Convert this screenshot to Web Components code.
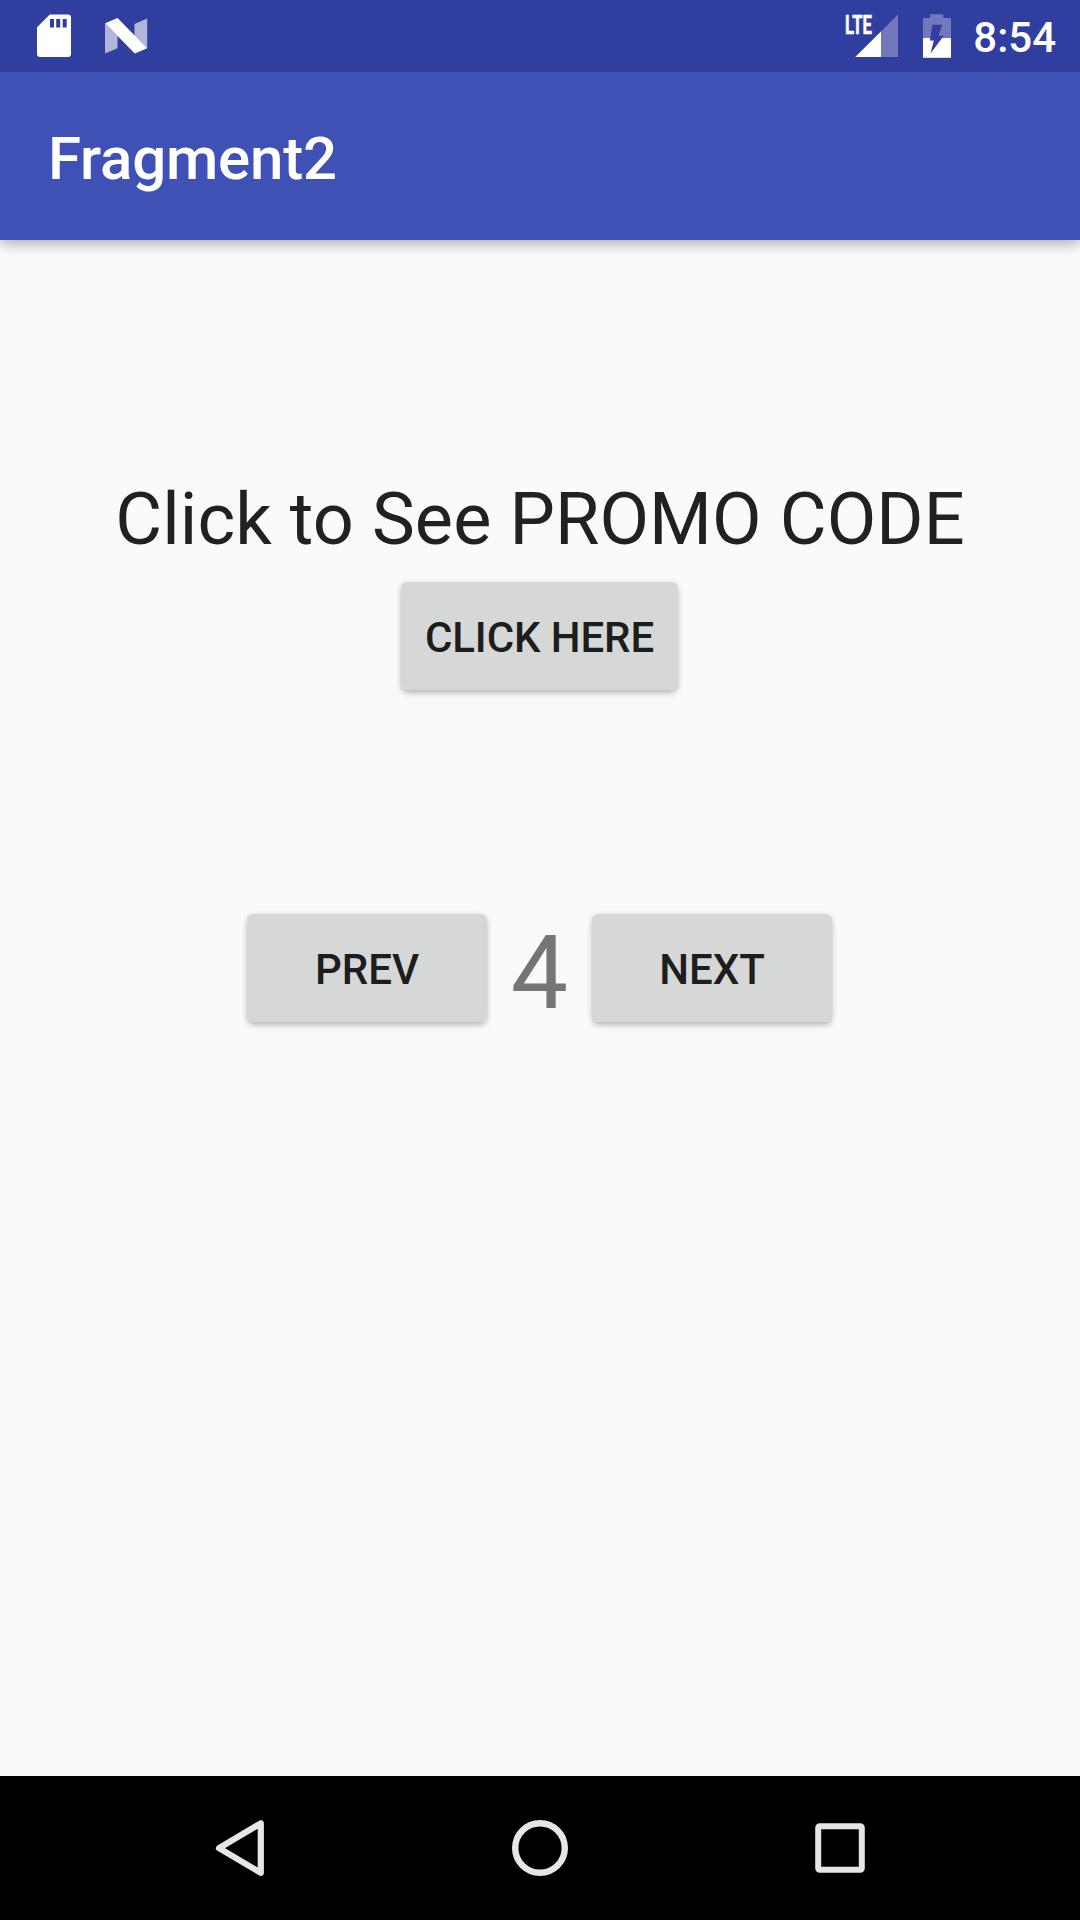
<!DOCTYPE html>
<html lang="en">
<head>
<meta charset="utf-8">
<title>Fragment2</title>
<style>
html,body{margin:0;padding:0;background:#fafafa}
body{font-family:Roboto,"Noto Sans",sans-serif}
</style>
</head>
<body>
<phone-screen>
  <status-bar slot="status">8:54</status-bar>
  <app-bar slot="bar">Fragment2</app-bar>
  <promo-panel>
    <span slot="heading">Click to See PROMO CODE</span>
    <raised-button slot="action" style="--w:277px">CLICK HERE</raised-button>
  </promo-panel>
  <page-stepper>
    <raised-button slot="prev">PREV</raised-button>
    <span>4</span>
    <raised-button slot="next">NEXT</raised-button>
  </page-stepper>
  <nav-bar slot="nav"></nav-bar>
</phone-screen>
<script>
function define(name, html) {
  const template = document.createElement('template');
  template.innerHTML = html;
  customElements.define(name, class extends HTMLElement {
    constructor() {
      super();
      this.attachShadow({ mode: 'open' }).append(template.content.cloneNode(true));
    }
  });
}

define('phone-screen', `
<style>
:host{display:flex;flex-direction:column;width:1080px;height:1920px;overflow:hidden;background:#fafafa}
main{flex:1;display:flex;flex-direction:column;align-items:center}
</style>
<slot name="status"></slot><slot name="bar"></slot><main><slot></slot></main><slot name="nav"></slot>`);

define('status-bar', `
<style>
:host{display:flex;align-items:center;box-sizing:border-box;height:72px;padding:0 24px 0 36px;background:#303f9f;color:#fff;font-size:42px;font-weight:500;line-height:48px;position:relative;z-index:2}
svg{display:block;flex:none}
.n{margin-left:32px}
.space{flex:1}
.battery{margin:0 22px 0 24px}
.clock{padding-top:4px}
</style>
<svg width="36" height="72" viewBox="36 0 36 72"><path fill="#fff" fill-rule="evenodd" d="M49.8 14.5H68a3 3 0 0 1 3 3V54a3 3 0 0 1-3 3H40a3 3 0 0 1-3-3V27.2ZM50 19v8.5h4V19ZM56.2 19v8.5h4V19ZM62.7 19v8.5h4V19Z"/></svg>
<svg class="n" width="44" height="72" viewBox="104 0 44 72"><path fill="#b2b5dc" d="M105 23.3 117.5 36V48.2L105 53.5ZM134.5 24 147.2 18.5V48.3L134.5 36Z"/><path fill="#fff" d="M105 23.3 117.5 18 147.2 48.3 134.8 53.6Z"/></svg>
<div class="space"></div>
<svg width="54" height="72" viewBox="845 0 54 72"><path fill="#7278bb" d="M898 14.5V57H855.3Z"/><path fill="#fff" d="M881 31.5V57H855.3Z"/><text x="845" y="33.5" font-size="26" font-weight="700" fill="#fff" stroke="#fff" stroke-width=".5" textLength="27" lengthAdjust="spacingAndGlyphs">LTE</text></svg>
<svg class="battery" width="28" height="72" viewBox="923 0 28 72"><path fill="#7278bb" d="M930 14.3h13.3V18H951V38H923V18h7Z"/><path fill="#fff" d="M923 38h28V57.8H923Z"/><path fill="#303f9f" d="M932.5 24.7H942.3L938.3 35.8H943.8L930.5 53.5L933.8 40.5H929.8Z"/></svg>
<span class="clock"><slot></slot></span>`);

define('app-bar', `
<style>
:host{display:flex;align-items:center;box-sizing:border-box;height:168px;padding:5px 48px 0;background:#3f51b5;color:#fff;font-size:60px;font-weight:500;line-height:72px;letter-spacing:-.2px;box-shadow:0 5px 12px rgba(0,0,0,.16),0 3px 12px rgba(0,0,0,.17);position:relative;z-index:1}
</style><slot></slot>`);

define('promo-panel', `
<style>
:host{display:flex;flex-direction:column;align-items:center;width:1080px;margin-top:237px}
h1{margin:0 0 20px;font-size:72px;line-height:85px;font-weight:400;letter-spacing:.12px;color:#212121;white-space:nowrap}
::slotted(raised-button){letter-spacing:-.1px;margin-right:1px}
</style><h1><slot name="heading"></slot></h1><slot name="action"></slot>`);

define('page-stepper', `
<style>
:host{display:flex;align-items:center;margin:224px 1px 0 0}
.count{width:105px;height:108px;box-sizing:border-box;padding-top:10px;text-align:center;font-size:102px;line-height:98px;color:#757575}
</style><slot name="prev"></slot><div class="count"><slot></slot></div><slot name="next"></slot>`);

define('raised-button', `
<style>
:host{display:block}
button{display:flex;align-items:center;justify-content:center;box-sizing:border-box;width:var(--w,240px);height:108px;padding:3px 0 0;border:0;border-radius:6px;background:#d6d7d7;color:#1d1d1d;font:500 42px/50px Roboto,"Noto Sans",sans-serif;letter-spacing:inherit;white-space:nowrap;box-shadow:0 4px 6px -1px rgba(0,0,0,.24),0 0 6px rgba(0,0,0,.09)}
</style><button><slot></slot></button>`);

define('nav-bar', `
<style>
:host{display:flex;align-items:center;justify-content:center;height:144px;gap:240px;background:#000}
svg{display:block;flex:none}
</style>
<svg width="60" height="60" viewBox="210 1818 60 60"><path fill="none" stroke="#e6e6e6" stroke-width="6.2" stroke-linejoin="round" d="M260.8 1823.3V1872.8L219 1848.2Z"/></svg>
<svg width="60" height="60" viewBox="510 1818 60 60"><circle cx="540" cy="1848" r="24.8" fill="none" stroke="#e6e6e6" stroke-width="6.4"/></svg>
<svg width="60" height="60" viewBox="810 1818 60 60"><rect x="818.2" y="1826.2" width="43.6" height="43.6" rx="1.5" fill="none" stroke="#e6e6e6" stroke-width="6"/></svg>`);
</script>
</body>
</html>
